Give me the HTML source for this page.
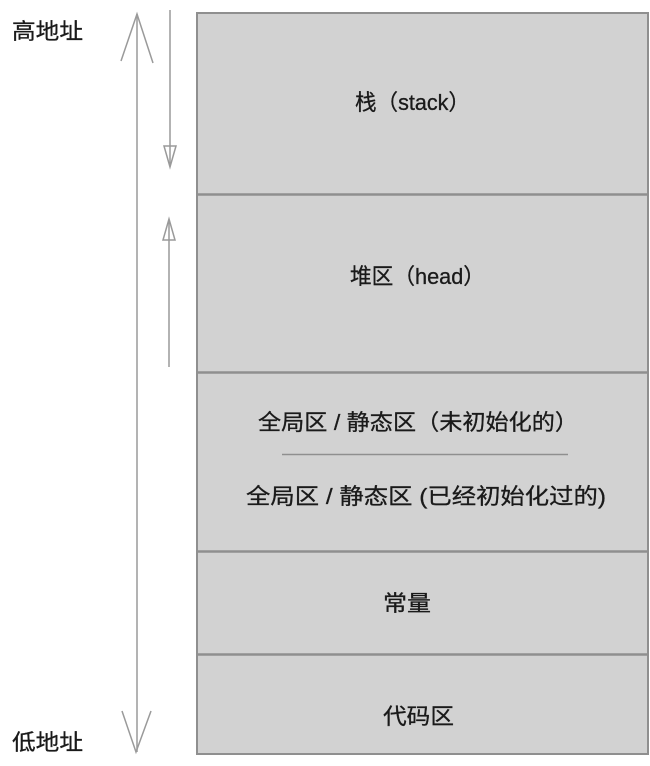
<!DOCTYPE html>
<html><head><meta charset="utf-8"><style>
html,body{margin:0;padding:0;background:#fff;width:650px;height:766px;overflow:hidden}
svg text{font-family:"Liberation Sans","Noto Sans CJK SC",sans-serif;fill:#1a1a1a;font-size:22px;stroke:#1a1a1a;stroke-width:0.3}
</style></head><body>
<svg width="650" height="766" viewBox="0 0 650 766" xmlns="http://www.w3.org/2000/svg">
<rect x="197" y="13" width="451" height="741" fill="#d2d2d2" stroke="#8f8f8f" stroke-width="2"/>
<g stroke="#8f8f8f" stroke-width="2.5">
<line x1="196" y1="194.5" x2="649" y2="194.5"/>
<line x1="196" y1="372.5" x2="649" y2="372.5"/>
<line x1="196" y1="551.5" x2="649" y2="551.5"/>
<line x1="196" y1="654.5" x2="649" y2="654.5"/>
</g>
<line x1="282" y1="454.5" x2="568" y2="454.5" stroke="#8f8f8f" stroke-width="1.5"/>
<g stroke="#9a9a9a" stroke-width="1.5" fill="none">
<line x1="137" y1="14" x2="137" y2="752"/>
<polyline points="121,61 137,14 153,63"/>
<polyline points="122,711 136,752 151,711"/>
<line x1="170" y1="10" x2="170" y2="166"/>
<polygon points="164,146 176,146 170,167"/>
<line x1="169" y1="220" x2="169" y2="367"/>
<polygon points="163,240 175,240 169,219"/>
</g>
<text x="12" y="39" textLength="71" lengthAdjust="spacingAndGlyphs">高地址</text>
<text x="12" y="750" textLength="71" lengthAdjust="spacingAndGlyphs">低地址</text>
<text x="355" y="110" textLength="115" lengthAdjust="spacingAndGlyphs">栈（stack）</text>
<text x="350" y="284" textLength="135" lengthAdjust="spacingAndGlyphs">堆区（head）</text>
<text x="258" y="430" textLength="320" lengthAdjust="spacingAndGlyphs">全局区 / 静态区（未初始化的）</text>
<text x="246" y="504" textLength="360" lengthAdjust="spacingAndGlyphs">全局区 / 静态区 (已经初始化过的)</text>
<text x="383" y="611" textLength="48" lengthAdjust="spacingAndGlyphs">常量</text>
<text x="383" y="724" textLength="71" lengthAdjust="spacingAndGlyphs">代码区</text>
</svg>
</body></html>
